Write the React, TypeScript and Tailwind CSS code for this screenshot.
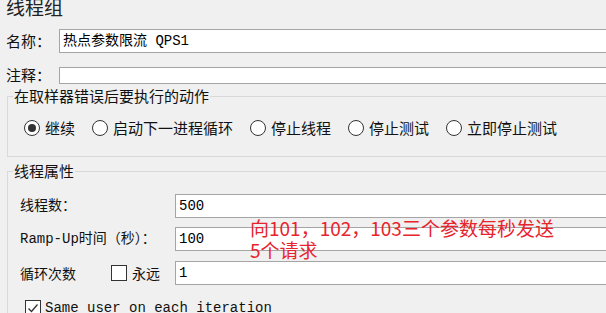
const mono = "font-['Liberation_Mono','Noto_Sans_CJK_SC',monospace]";

function Radio({ label, checked }: { label: string; checked?: boolean }) {
  return (
    <div className="flex items-center gap-[5px]">
      <span className="flex h-[16px] w-[16px] items-center justify-center rounded-full border border-[#333] bg-white">
        {checked && <span className="h-[8px] w-[8px] rounded-full bg-[#333]" />}
      </span>
      <span className="leading-[20px]">{label}</span>
    </div>
  );
}

function Field({ value, className = "" }: { value?: string; className?: string }) {
  return (
    <div
      className={`-mr-[20px] flex flex-1 items-center border border-[#a5a5a5] bg-white pl-[3px] text-[14px] text-black ${mono} ${className}`}
    >
      {value}
    </div>
  );
}

export default function App() {
  return (
    <div className="relative h-[313px] w-[606px] overflow-hidden bg-[#f0f0f0] font-['Noto_Sans_CJK_SC',sans-serif] text-[15px] text-[#111]">
      <div className="-mt-[5px] h-[24px] pl-[6px] text-[19px] leading-[24px] text-[#222]">线程组</div>

      <div className="mt-[10px] flex items-center pl-[6px]">
        <span className="w-[53px] leading-[20px]">名称：</span>
        <Field value="热点参数限流 QPS1" className="h-[24px]" />
      </div>

      <div className="mt-[12px] flex items-center pl-[6px]">
        <span className="w-[53px] leading-[20px]">注释：</span>
        <Field className="h-[17px]" />
      </div>

      <fieldset className="-mr-[10px] ml-[7px] mt-[1px] h-[71px] border border-[#d9d9d9]">
        <legend className="ml-[5px] px-[1px] leading-[20px]">在取样器错误后要执行的动作</legend>
        <div className="mt-[12px] flex items-center gap-[17px] pl-[16px]">
          <Radio label="继续" checked />
          <Radio label="启动下一进程循环" />
          <Radio label="停止线程" />
          <Radio label="停止测试" />
          <Radio label="立即停止测试" />
        </div>
      </fieldset>

      <fieldset className="-mr-[10px] ml-[7px] mt-[4px] h-[200px] border border-[#d9d9d9]">
        <legend className="ml-[5px] px-[1px] leading-[20px]">线程属性</legend>
        <div className="mt-[13px] flex flex-col pl-[12px] pr-[10px]">
          <div className="flex items-center">
            <span className={`w-[155px] text-[14px] leading-[20px] ${mono}`}>线程数：</span>
            <Field value="500" className="h-[24px]" />
          </div>
          <div className="mt-[9px] flex items-center">
            <span className={`w-[155px] text-[14px] leading-[20px] ${mono}`}>Ramp-Up时间（秒）：</span>
            <Field value="100" className="h-[24px]" />
          </div>
          <div className="mt-[10px] flex items-center">
            <span className="w-[91px] text-[14px] leading-[20px]">循环次数</span>
            <span className="h-[16px] w-[16px] border border-[#333] bg-white" />
            <span className="ml-[5px] w-[43px] text-[14px] leading-[20px]">永远</span>
            <Field value="1" className="h-[24px]" />
          </div>
          <div className="mt-[13px] flex items-center pl-[5px]">
            <span className="flex h-[16px] w-[16px] items-center justify-center border border-[#333] bg-white">
              <svg width="12" height="12" viewBox="0 0 12 12" fill="none">
                <path d="M1.5 6.5 L4.5 9.5 L10.5 2.5" stroke="#333" strokeWidth="1.3" />
              </svg>
            </span>
            <span className={`ml-[4px] text-[14px] leading-[20px] ${mono}`}>Same user on each iteration</span>
          </div>
        </div>
      </fieldset>

      <div className="absolute left-[250px] top-[217px] text-[19px] leading-[22px] text-[#e8232b]">
        向101，102，103三个参数每秒发送
        <br />
        5个请求
      </div>
    </div>
  );
}
